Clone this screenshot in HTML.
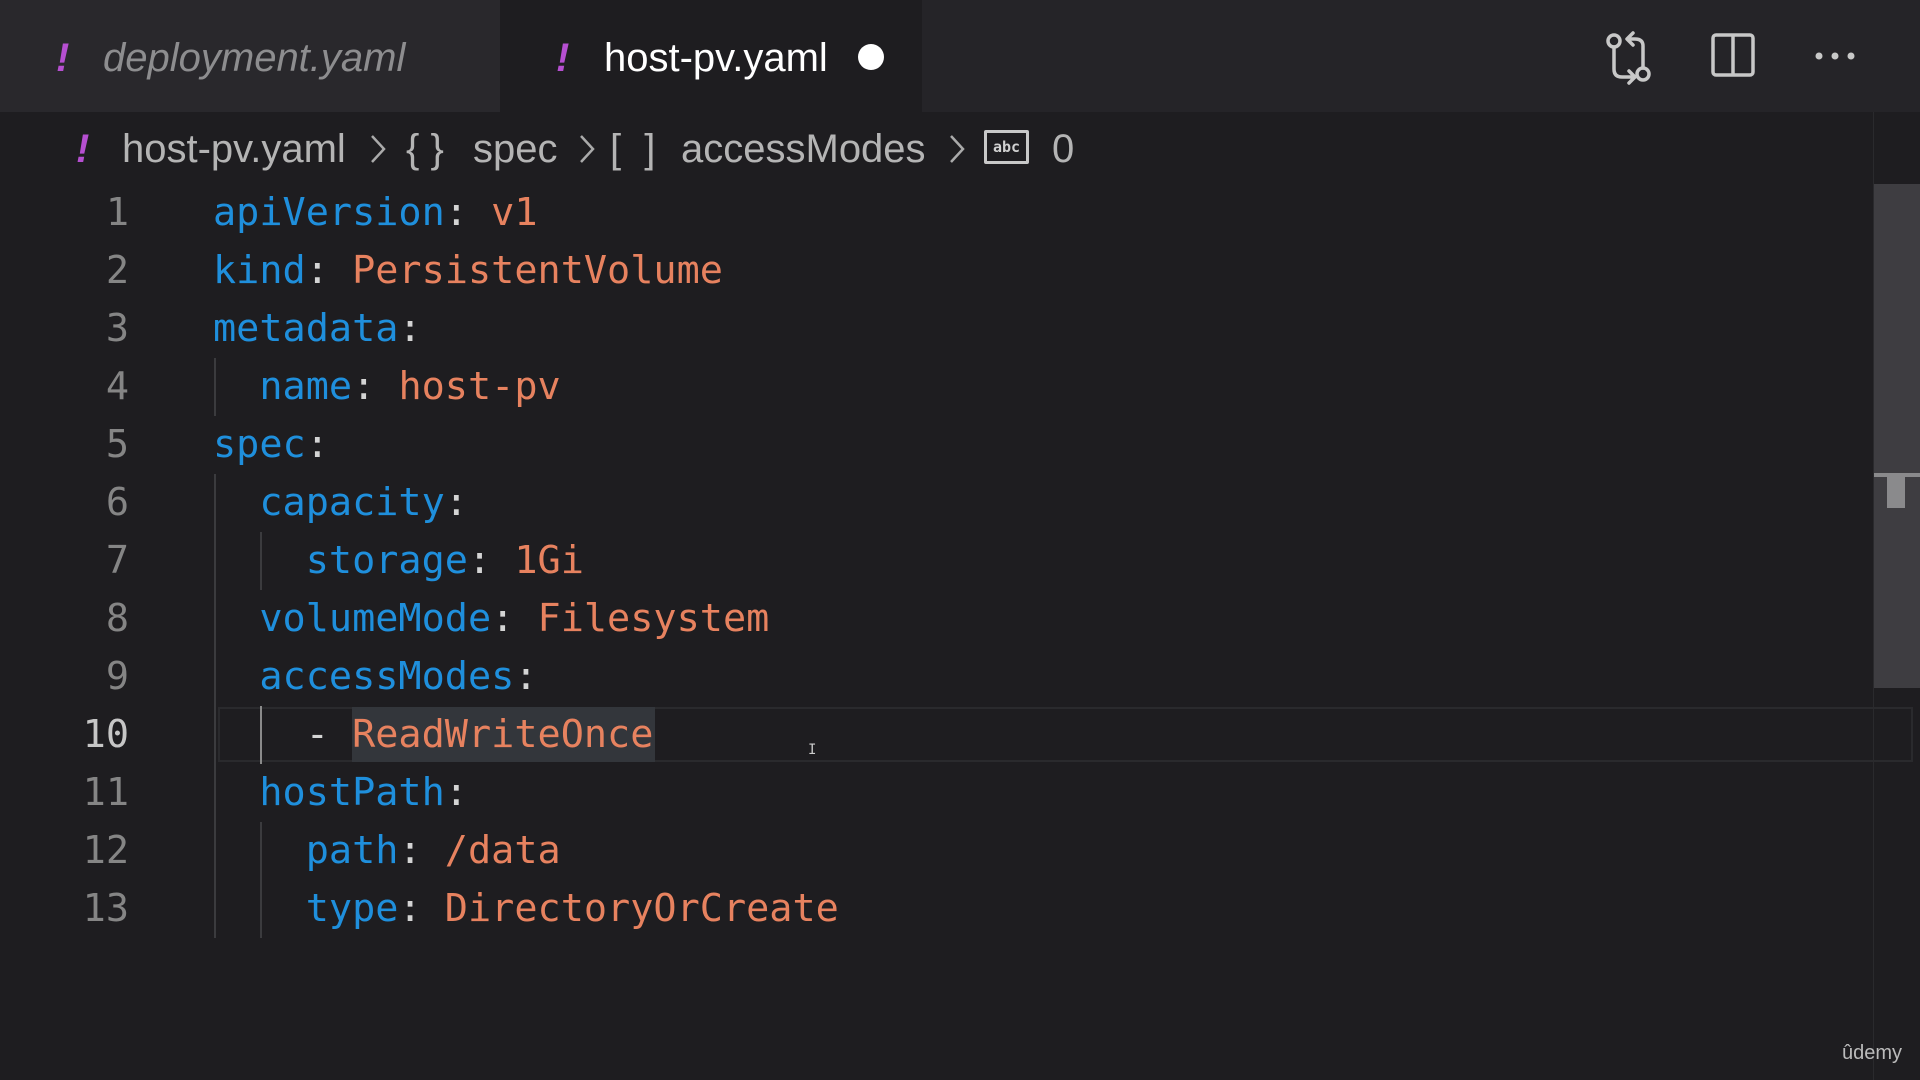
<!DOCTYPE html>
<html><head><meta charset="utf-8"><style>
*{margin:0;padding:0;box-sizing:border-box}
body{width:1920px;height:1080px;background:#1e1d20;overflow:hidden;position:relative;font-family:"Liberation Sans",sans-serif}
.a{position:absolute;white-space:pre}
.tabbar{position:absolute;left:0;top:0;width:1920px;height:112px;background:#252428}
.ui{font-size:40px;line-height:112px;top:2px}
.bc{font-size:40px;color:#b4b4b4;top:125px;line-height:48px}
.ex{color:#b64fd1;font-weight:bold;font-style:italic}
.ln{position:absolute;left:0;width:129px;text-align:right;font-family:"DejaVu Sans Mono","Liberation Mono",monospace;font-size:38.5px;color:#858585;line-height:58px}
.cd{position:absolute;left:213px;font-family:"DejaVu Sans Mono","Liberation Mono",monospace;font-size:38.5px;color:#d4d4d4;line-height:58px;white-space:pre}
.k{color:#1f8fdc}.v{color:#e7825f}
.g{position:absolute;width:2px;background:#3b3b3e}
.chev{position:absolute;top:134px}
</style></head><body>
<div class="tabbar"></div>
<div class="a" style="left:0;top:0;width:500px;height:112px;background:#29282c"></div>
<div class="a" style="left:500px;top:0;width:422px;height:112px;background:#1e1d20"></div>
<div class="a ui ex" style="left:56px">!</div>
<div class="a ui" style="left:103px;color:#8d8d8f;font-style:italic">deployment.yaml</div>
<div class="a ui ex" style="left:556px">!</div>
<div class="a ui" style="left:604px;color:#fff">host-pv.yaml</div>
<div class="a" style="left:858px;top:44px;width:26px;height:26px;border-radius:50%;background:#fff"></div>
<svg class="a" style="left:1600px;top:30px" width="60" height="56" viewBox="0 0 60 56" fill="none" stroke="#c8c8c8" stroke-width="3.5" stroke-linecap="round" stroke-linejoin="round">
<circle cx="14" cy="11" r="6"/><path d="M14 17v22q0 8 8 8h12M29 41l6 6-6 6"/>
<circle cx="43" cy="44" r="6"/><path d="M43 38V16q0-7-8-7h-6M33 3l-6 6 6 6"/>
</svg>
<svg class="a" style="left:1710px;top:32px" width="46" height="46" viewBox="0 0 46 46" fill="none" stroke="#c8c8c8" stroke-width="3.5"><rect x="3" y="3" width="40" height="40" rx="3"/><path d="M23 3v40"/></svg>
<svg class="a" style="left:1812px;top:48px" width="46" height="16"><circle cx="7" cy="8" r="3.5" fill="#c8c8c8"/><circle cx="23" cy="8" r="3.5" fill="#c8c8c8"/><circle cx="39" cy="8" r="3.5" fill="#c8c8c8"/></svg>

<div class="a bc ex" style="left:76px">!</div>
<div class="a bc" style="left:122px">host-pv.yaml</div>
<svg class="chev" style="left:369px" width="18" height="30"><path d="M3 2l12 13-12 13" fill="none" stroke="#aaa" stroke-width="2.5"/></svg>
<div class="a bc" style="left:406px">{ }</div>
<div class="a bc" style="left:473px">spec</div>
<svg class="chev" style="left:578px" width="18" height="30"><path d="M3 2l12 13-12 13" fill="none" stroke="#aaa" stroke-width="2.5"/></svg>
<div class="a bc" style="left:610px;letter-spacing:6px">[ ]</div>
<div class="a bc" style="left:681px">accessModes</div>
<svg class="chev" style="left:948px" width="18" height="30"><path d="M3 2l12 13-12 13" fill="none" stroke="#aaa" stroke-width="2.5"/></svg>
<div class="a" style="left:984px;top:130px;width:45px;height:34px;border:3px solid #c8c8c8;border-radius:2px;color:#d0d0d0;font:bold 15px 'DejaVu Sans Mono',monospace;text-align:center;line-height:28px">abc</div>
<div class="a bc" style="left:1052px">0</div>

<!-- current line -->
<div class="a" style="left:218px;top:707px;width:1695px;height:55px;border:2px solid #2a2a2d"></div>
<div class="a" style="left:352px;top:707px;width:303px;height:55px;background:#33363b"></div>

<!-- indent guides -->
<div class="g" style="left:214px;top:358px;height:58px"></div>
<div class="g" style="left:214px;top:474px;height:464px"></div>
<div class="g" style="left:260px;top:532px;height:58px"></div>
<div class="g" style="left:260px;top:706px;height:58px;background:#8a8a8a"></div>
<div class="g" style="left:260px;top:822px;height:116px"></div>

<div class="ln" style="top:184px">1</div><div class="cd" style="top:184px"><span class="k">apiVersion</span>: <span class="v">v1</span></div>
<div class="ln" style="top:242px">2</div><div class="cd" style="top:242px"><span class="k">kind</span>: <span class="v">PersistentVolume</span></div>
<div class="ln" style="top:300px">3</div><div class="cd" style="top:300px"><span class="k">metadata</span>:</div>
<div class="ln" style="top:358px">4</div><div class="cd" style="top:358px">  <span class="k">name</span>: <span class="v">host-pv</span></div>
<div class="ln" style="top:416px">5</div><div class="cd" style="top:416px"><span class="k">spec</span>:</div>
<div class="ln" style="top:474px">6</div><div class="cd" style="top:474px">  <span class="k">capacity</span>:</div>
<div class="ln" style="top:532px">7</div><div class="cd" style="top:532px">    <span class="k">storage</span>: <span class="v">1Gi</span></div>
<div class="ln" style="top:590px">8</div><div class="cd" style="top:590px">  <span class="k">volumeMode</span>: <span class="v">Filesystem</span></div>
<div class="ln" style="top:648px">9</div><div class="cd" style="top:648px">  <span class="k">accessModes</span>:</div>
<div class="ln" style="top:706px;color:#c6c6c6">10</div><div class="cd" style="top:706px">    - <span class="v">ReadWriteOnce</span></div>
<div class="ln" style="top:764px">11</div><div class="cd" style="top:764px">  <span class="k">hostPath</span>:</div>
<div class="ln" style="top:822px">12</div><div class="cd" style="top:822px">    <span class="k">path</span>: <span class="v">/data</span></div>
<div class="ln" style="top:880px">13</div><div class="cd" style="top:880px">    <span class="k">type</span>: <span class="v">DirectoryOrCreate</span></div>

<div class="a" style="left:808px;top:742px;color:#ccc;font:14px 'DejaVu Sans Mono',monospace">I</div>

<!-- scrollbar -->
<div class="a" style="left:1873px;top:112px;width:1px;height:968px;background:#2a2a2d"></div>
<div class="a" style="left:1874px;top:184px;width:46px;height:504px;background:#3e3d41"></div>
<div class="a" style="left:1874px;top:473px;width:46px;height:4px;background:#8a8a8c"></div>
<div class="a" style="left:1887px;top:477px;width:18px;height:31px;background:#8a8a8c"></div>
<div class="a" style="left:1842px;top:1042px;color:#bbb;font-size:20px">ûdemy</div>
</body></html>
